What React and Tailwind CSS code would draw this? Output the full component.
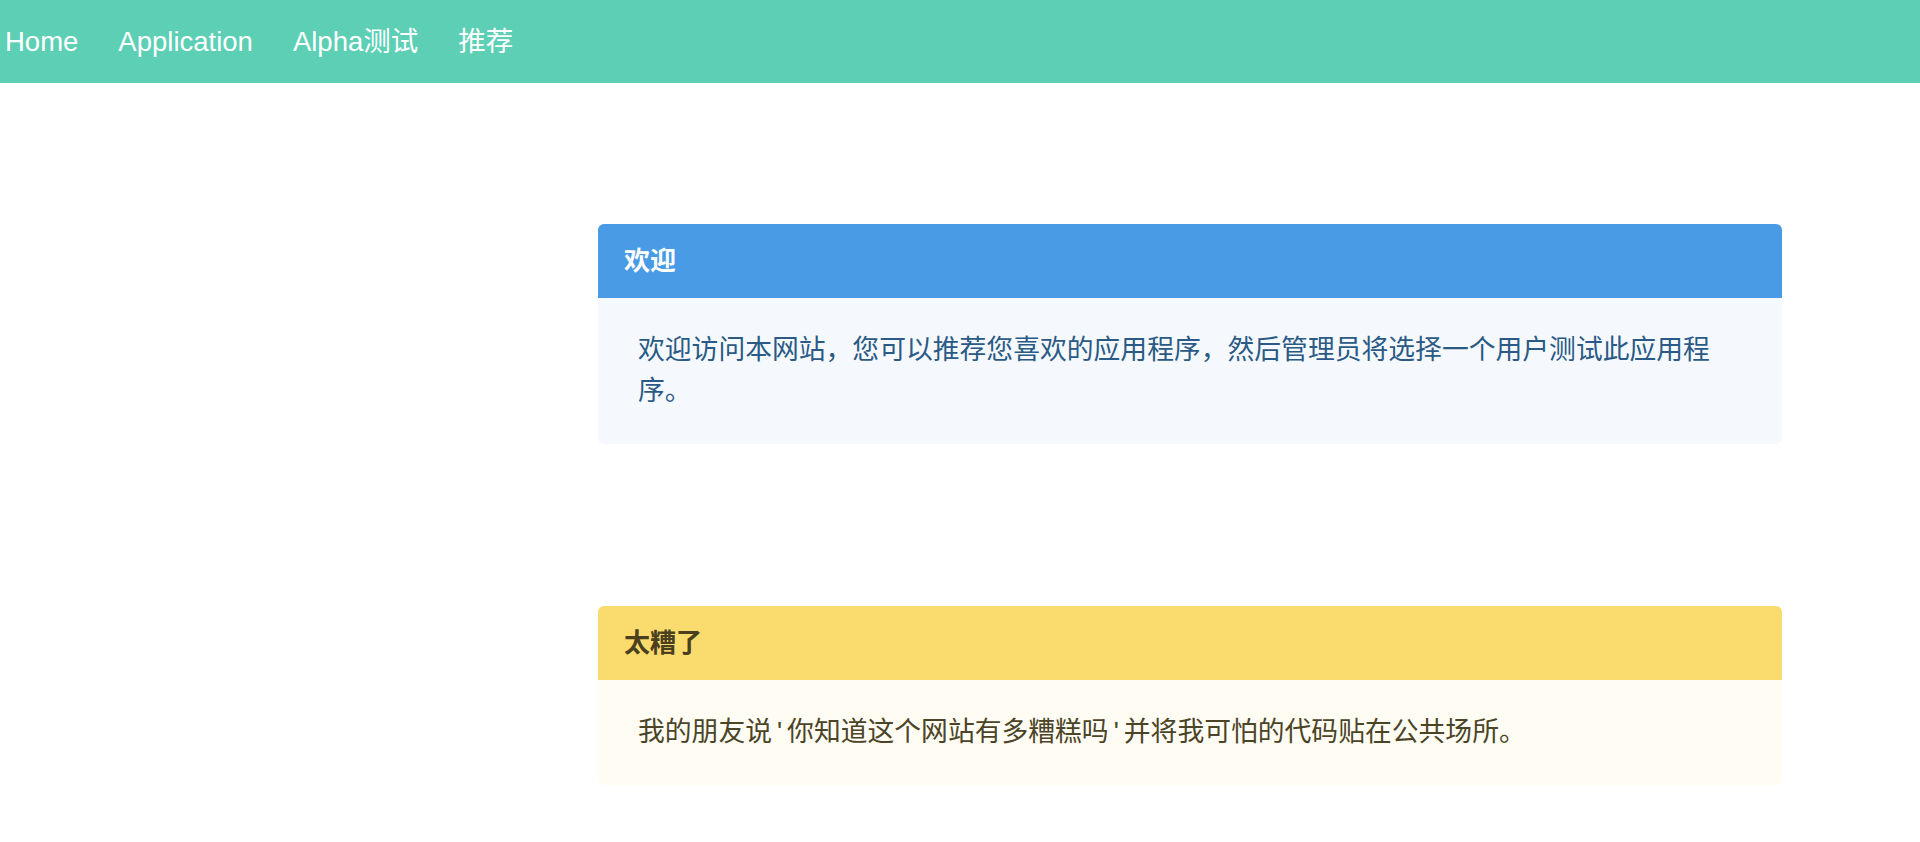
const font = "font-['Liberation_Sans','Noto_Sans_CJK_SC',sans-serif]";

function Message({ title, children, tone }) {
  const blue = tone === "info";
  return (
    <article className="w-[1184px] rounded-[6px]">
      <div
        className={`flex items-center h-[74px] px-[26px] rounded-t-[6px] text-[26px] leading-[32px] font-bold ${
          blue ? "bg-[#499be6] text-white" : "bg-[#fadb6e] text-[#4a4020]"
        }`}
      >
        {title}
      </div>
      <div
        className={`px-[40px] py-[32px] rounded-b-[6px] text-[26.8px] leading-[41px] ${
          blue ? "bg-[#f5f9fd] text-[#2a5a85]" : "bg-[#fffcf4] text-[#4b4426]"
        }`}
      >
        {children}
      </div>
    </article>
  );
}

const Q = () => <span className="px-[5px]">'</span>;

export default function App() {
  return (
    <div className={`min-h-[842px] bg-white ${font}`}>
      <nav className="h-[83px] bg-[#5dcfb5] flex items-center pl-[5px] gap-[40px] text-white text-[27.5px]">
        <a>Home</a>
        <a>Application</a>
        <a>Alpha测试</a>
        <a>推荐</a>
      </nav>

      <main className="flex flex-col gap-[162px] pt-[141px] pl-[598px]">
        <Message title="欢迎" tone="info">
          欢迎访问本网站，您可以推荐您喜欢的应用程序，然后管理员将选择一个用户测试此应用程序。
        </Message>
        <Message title="太糟了" tone="warning">
          我的朋友说<Q />你知道这个网站有多糟糕吗<Q />并将我可怕的代码贴在公共场所。
        </Message>
      </main>
    </div>
  );
}
